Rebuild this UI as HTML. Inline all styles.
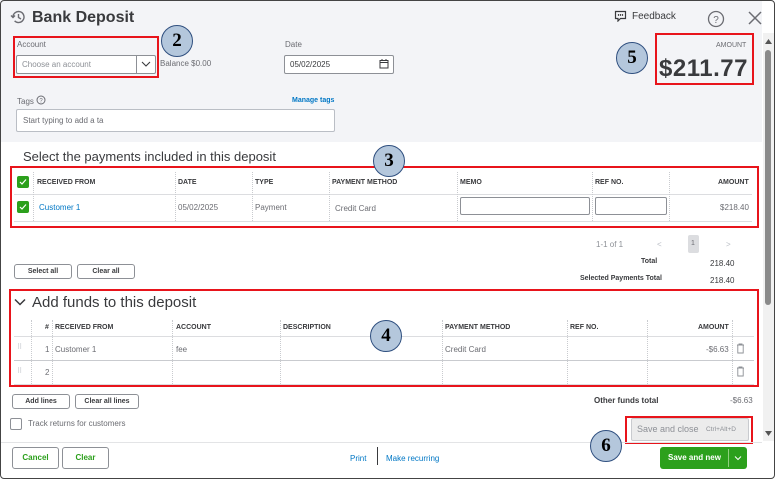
<!DOCTYPE html>
<html><head><meta charset="utf-8"><style>
*{margin:0;padding:0;box-sizing:border-box}
body{width:775px;height:479px;overflow:hidden;background:#fff;font-family:"Liberation Sans",sans-serif;color:#393a3d;position:relative}
.a{position:absolute}
.frame{left:0;top:0;width:775px;height:479px;border:1.5px solid #444;border-radius:4px;z-index:50;pointer-events:none}
.t{position:absolute;white-space:nowrap}
.red{position:absolute;border:2px solid #e8141b}
.circ{position:absolute;width:32px;height:32px;border-radius:50%;background:#b4c7dc;border:1.5px solid #2f4f7f;font-family:"Liberation Serif",serif;font-weight:bold;font-size:19px;color:#000;text-align:center;line-height:29px;z-index:40}
.inp{position:absolute;background:#fff;border:1px solid #8d9096;border-radius:2px}
.hd{font-size:7px;font-weight:bold;color:#393a3d}
.vl{position:absolute;width:0;border-left:1px dotted #c9cbcf}
.hl{position:absolute;height:1px;background:#dcdde0}
.btn{position:absolute;border:1px solid #8d9096;border-radius:3px;background:#fff;font-size:7px;font-weight:bold;text-align:center;color:#393a3d}
</style></head><body>
<div class="a" style="left:0;top:0;width:762px;height:142px;background:#f3f4f7"></div>
<div class="a frame"></div>

<svg class="a" style="left:10px;top:9px" width="16" height="16" viewBox="0 0 16 16"><path d="M3 8a5.5 5.5 0 1 1 1.6 3.9" fill="none" stroke="#6b6c72" stroke-width="1.4"/><path d="M1 6.5l2 2 2-2" fill="none" stroke="#6b6c72" stroke-width="1.4"/><path d="M8.5 5v3.5l2.5 1.5" fill="none" stroke="#6b6c72" stroke-width="1.4"/></svg>
<div class="t" style="left:32px;top:9px;font-size:16px;font-weight:bold;color:#393a3d">Bank Deposit</div>

<div class="t" style="left:632px;top:11px;font-size:10px">Feedback</div>
<svg class="a" style="left:614px;top:10px" width="13" height="12" viewBox="0 0 13 12"><path d="M1.5 1.5h10v7h-5l-2.5 2.5v-2.5h-2.5z" fill="none" stroke="#393a3d" stroke-width="1.2"/><circle cx="4.5" cy="5" r=".7"/><circle cx="6.5" cy="5" r=".7"/><circle cx="8.5" cy="5" r=".7"/></svg>
<svg class="a" style="left:707px;top:10px" width="18" height="18"><circle cx="9" cy="9" r="7.5" fill="none" stroke="#6b6c72" stroke-width="1.3"/><text x="9" y="13" font-size="10" text-anchor="middle" fill="#6b6c72" font-family="Liberation Sans">?</text></svg>
<svg class="a" style="left:748px;top:11px" width="14" height="14"><path d="M1 1l12 12M13 1L1 13" stroke="#6b6c72" stroke-width="1.5"/></svg>

<div class="t" style="left:17px;top:40px;font-size:8px;color:#6b6c72">Account</div>
<div class="inp" style="left:16px;top:55px;width:140px;height:19px"></div>
<div class="t" style="left:22px;top:60px;font-size:8px;color:#8d9096">Choose an account</div>
<div class="a" style="left:136px;top:55px;width:1px;height:19px;background:#8d9096"></div>
<svg class="a" style="left:141px;top:60px" width="10" height="8"><path d="M1 2l4 4 4-4" fill="none" stroke="#393a3d" stroke-width="1.1"/></svg>
<div class="red" style="left:13px;top:36px;width:146px;height:42px"></div>
<div class="t" style="left:160px;top:59px;font-size:8px;color:#6b6c72">Balance $0.00</div>
<div class="circ" style="left:161px;top:25px">2</div>

<div class="t" style="left:285px;top:40px;font-size:8px;color:#6b6c72">Date</div>
<div class="inp" style="left:284px;top:55px;width:110px;height:19px"></div>
<div class="t" style="left:290px;top:60px;font-size:8px">05/02/2025</div>
<svg class="a" style="left:379px;top:59px" width="10" height="10"><rect x="1" y="1.5" width="8" height="7.5" fill="none" stroke="#393a3d" stroke-width="1"/><path d="M1 3.5h8M3 0v2M7 0v2" stroke="#393a3d"/></svg>

<div class="t" style="left:17px;top:97px;font-size:8px;color:#6b6c72">Tags</div>
<svg class="a" style="left:36px;top:95px" width="10" height="10"><circle cx="5" cy="5" r="4" fill="none" stroke="#6b6c72"/><text x="5" y="7.5" font-size="6" text-anchor="middle" fill="#6b6c72">?</text></svg>
<div class="t" style="left:292px;top:97px;font-size:7px;font-weight:bold;color:#0077c5">Manage tags</div>
<div class="inp" style="left:16px;top:109px;width:319px;height:23px;border-color:#babec5"></div>
<div class="t" style="left:23px;top:116px;font-size:8px;color:#6b6c72">Start typing to add a ta</div>

<div class="t" style="left:716px;top:42px;font-size:7px;color:#6b6c72">AMOUNT</div>
<div class="t" style="left:659px;top:55px;font-size:24px;font-weight:bold;letter-spacing:0.5px;color:#393a3d">$211.77</div>
<div class="red" style="left:655px;top:33px;width:99px;height:52px"></div>
<div class="circ" style="left:616px;top:42px">5</div>

<!-- scrollbar -->
<div class="a" style="left:763px;top:33px;width:11px;height:408px;background:#f1f1f1"></div>
<div class="a" style="left:765px;top:50px;width:6px;height:255px;background:#8a8a8a;border-radius:3px"></div>
<svg class="a" style="left:764px;top:38px" width="9" height="7"><path d="M1 6l3.5-5 3.5 5z" fill="#555"/></svg>
<svg class="a" style="left:764px;top:430px" width="9" height="7"><path d="M1 1l3.5 5 3.5-5z" fill="#555"/></svg>

<div class="t" style="left:23px;top:149px;font-size:13px;color:#393a3d">Select the payments included in this deposit</div>

<!-- table 1 -->
<div class="a" style="left:17px;top:176px;width:12px;height:12px;background:#2ca01c;border-radius:2px"></div>
<svg class="a" style="left:19px;top:178px" width="8" height="8"><path d="M1 4l2 2 4-4.5" fill="none" stroke="#fff" stroke-width="1.2"/></svg>
<div class="a" style="left:17px;top:201px;width:12px;height:12px;background:#2ca01c;border-radius:2px"></div>
<svg class="a" style="left:19px;top:203px" width="8" height="8"><path d="M1 4l2 2 4-4.5" fill="none" stroke="#fff" stroke-width="1.2"/></svg>
<div class="hl" style="left:14px;top:194px;width:738px"></div>
<div class="hl" style="left:14px;top:221px;width:738px"></div>
<div class="vl" style="left:33px;top:172px;height:49px"></div>
<div class="vl" style="left:175px;top:172px;height:49px"></div>
<div class="vl" style="left:252px;top:172px;height:49px"></div>
<div class="vl" style="left:329px;top:172px;height:49px"></div>
<div class="vl" style="left:457px;top:172px;height:49px"></div>
<div class="vl" style="left:592px;top:172px;height:49px"></div>
<div class="vl" style="left:669px;top:172px;height:49px"></div>
<div class="t hd" style="left:37px;top:179px">RECEIVED FROM</div>
<div class="t hd" style="left:178px;top:179px">DATE</div>
<div class="t hd" style="left:255px;top:179px">TYPE</div>
<div class="t hd" style="left:332px;top:179px">PAYMENT METHOD</div>
<div class="t hd" style="left:460px;top:179px">MEMO</div>
<div class="t hd" style="left:595px;top:179px">REF NO.</div>
<div class="t hd" style="left:718px;top:179px">AMOUNT</div>
<div class="t" style="left:39px;top:203px;font-size:8px;color:#0077c5">Customer 1</div>
<div class="t" style="left:178px;top:203px;font-size:8px;color:#6b6c72">05/02/2025</div>
<div class="t" style="left:255px;top:203px;font-size:8px;color:#6b6c72">Payment</div>
<div class="t" style="left:335px;top:204px;font-size:8px;color:#6b6c72">Credit Card</div>
<div class="inp" style="left:460px;top:197px;width:130px;height:18px"></div>
<div class="inp" style="left:595px;top:197px;width:72px;height:18px"></div>
<div class="t" style="left:720px;top:203px;font-size:8px;color:#6b6c72">$218.40</div>
<div class="red" style="left:10px;top:166px;width:749px;height:62px"></div>
<div class="circ" style="left:373px;top:145px">3</div>

<div class="t" style="left:596px;top:240px;font-size:8px;color:#8d9096">1-1 of 1</div>
<div class="t" style="left:657px;top:240px;font-size:8px;color:#babec5">&lt;</div>
<div class="a" style="left:688px;top:235px;width:11px;height:18px;background:#dcdde0;border-radius:2px"></div>
<div class="t" style="left:691px;top:240px;font-size:7px;color:#6b6c72">1</div>
<div class="t" style="left:726px;top:240px;font-size:8px;color:#babec5">&gt;</div>
<div class="t" style="left:641px;top:258px;font-size:7px;font-weight:bold">Total</div>
<div class="t" style="left:710px;top:259px;font-size:8px">218.40</div>
<div class="t" style="left:580px;top:275px;font-size:7px;font-weight:bold">Selected Payments Total</div>
<div class="t" style="left:710px;top:276px;font-size:8px">218.40</div>
<div class="btn" style="left:14px;top:264px;width:58px;height:15px;line-height:13px">Select all</div>
<div class="btn" style="left:77px;top:264px;width:58px;height:15px;line-height:13px">Clear all</div>

<!-- add funds -->
<svg class="a" style="left:14px;top:298px" width="12" height="9"><path d="M1 1.5l5 5 5-5" fill="none" stroke="#393a3d" stroke-width="1.5"/></svg>
<div class="t" style="left:32px;top:294px;font-size:15px;color:#393a3d">Add funds to this deposit</div>
<div class="hl" style="left:14px;top:336px;width:740px"></div>
<div class="hl" style="left:14px;top:360px;width:740px;background:#c9cbcf"></div>
<div class="hl" style="left:14px;top:384px;width:740px"></div>
<div class="vl" style="left:31px;top:320px;height:64px"></div>
<div class="vl" style="left:52px;top:320px;height:64px"></div>
<div class="vl" style="left:172px;top:320px;height:64px"></div>
<div class="vl" style="left:280px;top:320px;height:64px"></div>
<div class="vl" style="left:442px;top:320px;height:64px"></div>
<div class="vl" style="left:567px;top:320px;height:64px"></div>
<div class="vl" style="left:647px;top:320px;height:64px"></div>
<div class="vl" style="left:732px;top:320px;height:64px"></div>
<div class="t hd" style="left:45px;top:324px">#</div>
<div class="t hd" style="left:55px;top:324px">RECEIVED FROM</div>
<div class="t hd" style="left:176px;top:324px">ACCOUNT</div>
<div class="t hd" style="left:283px;top:324px">DESCRIPTION</div>
<div class="t hd" style="left:445px;top:324px">PAYMENT METHOD</div>
<div class="t hd" style="left:570px;top:324px">REF NO.</div>
<div class="t hd" style="left:698px;top:324px">AMOUNT</div>
<div class="t" style="left:17px;top:343px;font-size:7px;color:#babec5">⠿</div>
<div class="t" style="left:17px;top:367px;font-size:7px;color:#babec5">⠿</div>
<div class="t" style="left:45px;top:345px;font-size:8px;color:#6b6c72">1</div>
<div class="t" style="left:45px;top:368px;font-size:8px;color:#6b6c72">2</div>
<div class="t" style="left:55px;top:345px;font-size:8px;color:#6b6c72">Customer 1</div>
<div class="t" style="left:176px;top:345px;font-size:8px;color:#6b6c72">fee</div>
<div class="t" style="left:445px;top:345px;font-size:8px;color:#6b6c72">Credit Card</div>
<div class="t" style="left:706px;top:345px;font-size:8px;color:#6b6c72">-$6.63</div>
<svg class="a" style="left:736px;top:343px" width="9" height="11"><path d="M1 2h7M3 2V1h3v1M1.8 2.5v7.5h5.4V2.5" fill="none" stroke="#8d9096" stroke-width=".9"/></svg>
<svg class="a" style="left:736px;top:366px" width="9" height="11"><path d="M1 2h7M3 2V1h3v1M1.8 2.5v7.5h5.4V2.5" fill="none" stroke="#8d9096" stroke-width=".9"/></svg>
<div class="red" style="left:9px;top:289px;width:750px;height:98px"></div>
<div class="circ" style="left:370px;top:320px">4</div>

<div class="btn" style="left:12px;top:394px;width:58px;height:15px;line-height:13px">Add lines</div>
<div class="btn" style="left:75px;top:394px;width:64px;height:15px;line-height:13px">Clear all lines</div>
<div class="t" style="left:594px;top:396px;font-size:8px;font-weight:bold">Other funds total</div>
<div class="t" style="left:730px;top:396px;font-size:8px;color:#6b6c72">-$6.63</div>
<div class="a" style="left:10px;top:418px;width:12px;height:12px;border:1px solid #8d9096;border-radius:2px;background:#fff"></div>
<div class="t" style="left:28px;top:419px;font-size:8px;color:#6b6c72">Track returns for customers</div>

<div class="a" style="left:631px;top:418px;width:118px;height:23px;background:#ececec;border:1px solid #c9cbcf;border-radius:2px"></div>
<div class="t" style="left:637px;top:424px;font-size:9px;color:#8d9096">Save and close</div>
<div class="t" style="left:706px;top:426px;font-size:6.5px;color:#8d9096">Ctrl+Alt+D</div>
<div class="red" style="left:625px;top:416px;width:128px;height:28px"></div>

<!-- footer -->
<div class="a" style="left:1px;top:442px;width:761px;height:1px;background:#e3e4e6"></div>
<div class="btn" style="left:12px;top:447px;width:47px;height:22px;line-height:20px;color:#2ca01c;font-size:8px">Cancel</div>
<div class="btn" style="left:62px;top:447px;width:47px;height:22px;line-height:20px;color:#2ca01c;font-size:8px">Clear</div>
<div class="t" style="left:350px;top:454px;font-size:8px;color:#0077c5">Print</div>
<div class="a" style="left:377px;top:447px;width:1px;height:18px;background:#393a3d"></div>
<div class="t" style="left:386px;top:454px;font-size:8px;color:#0077c5">Make recurring</div>
<div class="a" style="left:660px;top:447px;width:87px;height:22px;background:#2ca01c;border-radius:3px"></div>
<div class="t" style="left:668px;top:453px;font-size:8px;font-weight:bold;color:#fff">Save and new</div>
<div class="a" style="left:728px;top:449px;width:1px;height:18px;background:#8fd07f"></div>
<svg class="a" style="left:734px;top:455px" width="8" height="6"><path d="M1 1.5l3 3 3-3" fill="none" stroke="#fff" stroke-width="1"/></svg>
<div class="circ" style="left:590px;top:430px">6</div>
</body></html>
